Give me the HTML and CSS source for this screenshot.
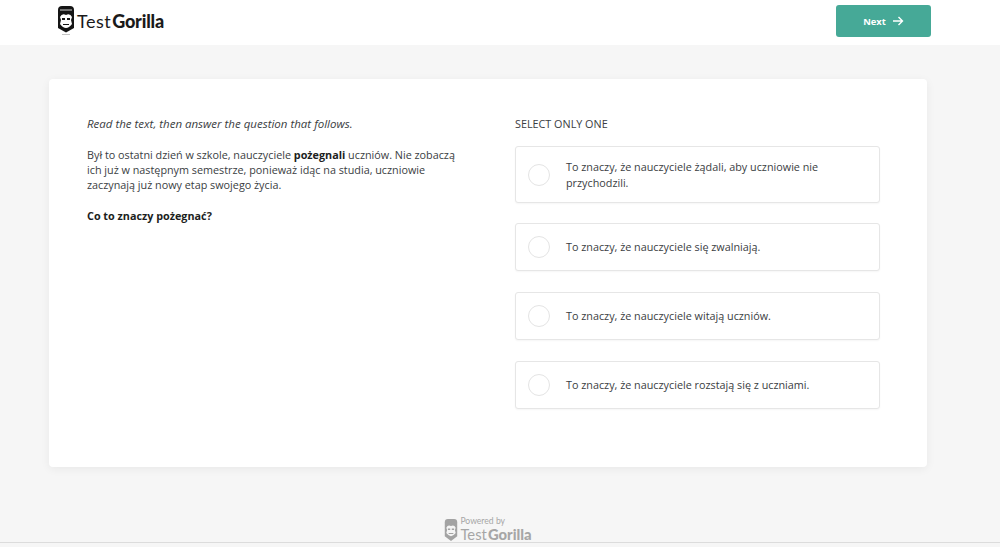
FILE: index.html
```html
<!DOCTYPE html>
<html lang="pl">
<head>
  <meta charset="UTF-8" />
  <meta name="viewport" content="width=device-width, initial-scale=1.0" />
  <title>TestGorilla</title>
  <link rel="stylesheet" href="styles.css">
</head>

<body>
  <header class="top-bar">
    <div class="logo">
      <svg class="logo-icon" xmlns="http://www.w3.org/2000/svg" viewBox="0 0 18 30" width="18" height="30">
        <path d="M1 5 Q1 1 5 1 H13 Q17 1 17 5 V23 L9 27.5 L1 23 Z" fill="#151515"></path>
        <path d="M3 5 H15" stroke="#fff" stroke-width="0.8"></path>
        <path d="M3 12 Q5 8 9 10 Q13 8 15 12 L14 15 L15 19 Q12 23 9 23 Q6 23 3 19 L4 15 Z" fill="#fff"></path>
        <path d="M5 13 H8 V15 H5 Z M10 13 H13 V15 H10 Z M6 19 H12 V20 H6 Z" fill="#151515"></path>
        <path d="M5 29.5 H13" stroke="#c4c4c4" stroke-width="1"></path>
      </svg>
      <span class="logo-text">Test<b>Gorilla</b></span>
    </div>
    <button class="next-btn" type="button">
      Next
      <svg xmlns="http://www.w3.org/2000/svg" viewBox="0 0 12 12" width="12" height="12">
        <path d="M1 6 H10.5 M6.5 2 L10.5 6 L6.5 10" fill="none" stroke="#fff" stroke-width="1.4"></path>
      </svg>
    </button>
  </header>

  <main class="card">
    <section class="question">
      <p class="hint">Read the text, then answer the question that follows.</p>
      <p class="passage">Był to ostatni dzień w szkole, nauczyciele <b>pożegnali</b> uczniów. Nie zobaczą ich już w następnym semestrze, ponieważ idąc na studia, uczniowie zaczynają już nowy etap swojego życia.</p>
      <p class="ask">Co to znaczy pożegnać?</p>
    </section>

    <section class="answers">
      <h2>SELECT ONLY ONE</h2>
      <div class="option option-tall">
        <span class="radio"></span>
        <span>To znaczy, że nauczyciele żądali, aby uczniowie nie przychodzili.</span>
      </div>
      <div class="option">
        <span class="radio"></span>
        <span>To znaczy, że nauczyciele się zwalniają.</span>
      </div>
      <div class="option">
        <span class="radio"></span>
        <span>To znaczy, że nauczyciele witają uczniów.</span>
      </div>
      <div class="option">
        <span class="radio"></span>
        <span>To znaczy, że nauczyciele rozstają się z uczniami.</span>
      </div>
    </section>
  </main>

  <footer class="powered">
    <svg xmlns="http://www.w3.org/2000/svg" viewBox="0 0 18 30" width="14" height="24">
      <path d="M1 5 Q1 1 5 1 H13 Q17 1 17 5 V23 L9 29 L1 23 Z" fill="#a3a3a3"></path>
      <path d="M3 12 Q5 8 9 10 Q13 8 15 12 L14 15 L15 19 Q12 23 9 23 Q6 23 3 19 L4 15 Z" fill="#f5f5f5"></path>
      <path d="M5 13 H8 V15 H5 Z M10 13 H13 V15 H10 Z M6 19 H12 V20 H6 Z" fill="#a3a3a3"></path>
    </svg>
    <div class="powered-text">
      <small>Powered by</small>
      <span>Test<b>Gorilla</b></span>
    </div>
  </footer>
</body>
</html>
```

FILE: styles.css
```css
* {
  margin: 0;
  padding: 0;
  box-sizing: border-box;
}

body {
  font-family: 'Open Sans', sans-serif;
  color: #3a3d42;
  background-color: #f6f6f6;
  height: 547px;
  overflow: hidden;
  font-size: 10.8px;
}

.top-bar {
  height: 45px;
  background-color: #fff;
  display: flex;
  justify-content: space-between;
  align-items: flex-start;
  padding: 5px 69px 0 57px;
}

.logo {
  display: flex;
  align-items: center;
  gap: 2px;
}

.logo-icon {
  display: block;
}

.logo-text {
  font-family: 'Lato', sans-serif;
  font-size: 18px;
  font-weight: 400;
  letter-spacing: 0.5px;
  line-height: 30px;
  color: #1a1a1a;
  position: relative;
  top: 1px;
}

.logo-text b {
  font-weight: 900;
  letter-spacing: -0.2px;
  margin-left: 1px;
}

.next-btn {
  width: 95px;
  height: 32px;
  background-color: #46a997;
  color: #fff;
  border: none;
  border-radius: 3px;
  font-family: 'Open Sans', sans-serif;
  font-size: 9.4px;
  font-weight: 700;
  display: flex;
  justify-content: center;
  align-items: center;
  gap: 6px;
}

.card {
  width: 878px;
  height: 388px;
  margin: 34px 0 0 49px;
  background-color: #fff;
  border-radius: 4px;
  box-shadow: 0 2px 10px rgba(0, 0, 0, 0.06);
  padding: 37px 47px 0 38px;
  display: flex;
  justify-content: space-between;
}

.question {
  width: 380px;
  line-height: 15px;
}

.hint {
  font-size: 11.5px;
  font-style: italic;
  margin-bottom: 16px;
}

.passage {
  margin-bottom: 16px;
}

.passage b {
  color: #1c1e21;
}

.ask {
  font-weight: 700;
  color: #1c1e21;
}

.answers {
  width: 365px;
}

.answers h2 {
  font-size: 10.8px;
  font-weight: 400;
  line-height: 16px;
  margin-bottom: 14px;
}

.option {
  height: 48px;
  margin-bottom: 21px;
  background-color: #fff;
  border: 1px solid #e6e6e6;
  border-radius: 3px;
  box-shadow: 0 1px 2px rgba(0, 0, 0, 0.04);
  padding: 0 40px 0 12px;
  display: flex;
  align-items: center;
  gap: 16px;
  line-height: 16px;
}

.option-tall {
  height: 57px;
  margin-bottom: 20px;
}

.radio {
  flex: none;
  width: 22px;
  height: 22px;
  border: 1px solid #e4e4e4;
  border-radius: 50%;
}

.powered {
  margin-top: 50px;
  display: flex;
  justify-content: center;
  align-items: flex-end;
  gap: 2px;
  height: 26px;
  border-bottom: 1px solid #dcdcdc;
  color: #a6a6a6;
  padding-right: 24px;
}

.powered-text {
  display: flex;
  flex-direction: column;
  font-family: 'Lato', sans-serif;
}

.powered-text small {
  font-size: 8.6px;
  line-height: 9px;
}

.powered-text span {
  font-size: 14.8px;
  font-weight: 400;
  line-height: 16px;
}

.powered-text b {
  font-weight: 900;
  margin-left: 1px;
}
```
